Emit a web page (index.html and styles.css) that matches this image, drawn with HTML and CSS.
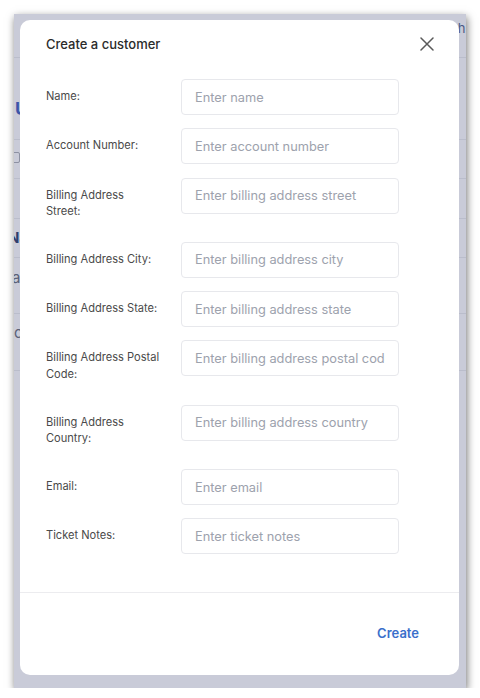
FILE: index.html
```html
<!DOCTYPE html>
<html>
<head>
    <title>Create a customer</title>
    <link rel="stylesheet" href="styles.css">
</head>
<body>
    <div class="frame">
        <!-- bits of the page behind the dimmed overlay -->
        <span class="behind behind-u">U</span>
        <span class="behind behind-line" style="top: 43px;"></span>
        <span class="behind behind-line" style="top: 125px;"></span>
        <span class="behind behind-line" style="top: 164px;"></span>
        <span class="behind behind-line" style="top: 204px;"></span>
        <span class="behind behind-line" style="top: 243px;"></span>
        <span class="behind behind-line" style="top: 299px;"></span>
        <span class="behind behind-line" style="top: 356px;"></span>
        <span class="behind behind-box"></span>
        <span class="behind behind-na">Na</span>
        <span class="behind behind-a">a</span>
        <span class="behind behind-c">c</span>
        <span class="behind behind-h">nh</span>

        <div class="modal">
            <div class="modal-header">
                <h2 class="modal-title">Create a customer</h2>
                <button class="close-btn" aria-label="Close">
                    <svg width="14" height="14" viewBox="0 0 14 14">
                        <path d="M1 1L13 13M13 1L1 13" stroke="#5a5a5a" stroke-width="1.5" stroke-linecap="round"/>
                    </svg>
                </button>
            </div>
            <form class="modal-form">
                <div class="form-row">
                    <label for="name">Name:</label>
                    <input type="text" id="name" placeholder="Enter name">
                </div>
                <div class="form-row">
                    <label for="account">Account Number:</label>
                    <input type="text" id="account" placeholder="Enter account number">
                </div>
                <div class="form-row">
                    <label for="street">Billing Address Street:</label>
                    <input type="text" id="street" placeholder="Enter billing address street">
                </div>
                <div class="form-row">
                    <label for="city">Billing Address City:</label>
                    <input type="text" id="city" placeholder="Enter billing address city">
                </div>
                <div class="form-row">
                    <label for="state">Billing Address State:</label>
                    <input type="text" id="state" placeholder="Enter billing address state">
                </div>
                <div class="form-row">
                    <label for="postal">Billing Address Postal Code:</label>
                    <input type="text" id="postal" placeholder="Enter billing address postal code">
                </div>
                <div class="form-row">
                    <label for="country">Billing Address Country:</label>
                    <input type="text" id="country" placeholder="Enter billing address country">
                </div>
                <div class="form-row">
                    <label for="email">Email:</label>
                    <input type="text" id="email" placeholder="Enter email">
                </div>
                <div class="form-row">
                    <label for="notes">Ticket Notes:</label>
                    <input type="text" id="notes" placeholder="Enter ticket notes">
                </div>
            </form>
            <div class="modal-footer">
                <button class="create-btn">Create</button>
            </div>
        </div>
    </div>
</body>
</html>
```

FILE: styles.css
```css
html, body {
    margin: 0;
    padding: 0;
    background: #ffffff;
    font-family: Inter, "Noto Sans", sans-serif;
}

.frame {
    position: relative;
    box-sizing: border-box;
    width: 452px;
    height: 674px;
    margin: 14px 0 0 14px;
    padding: 6px 7px 13px 6px;
    display: flex;
    flex-direction: column;
    background: #c9cbd8;
    box-shadow: 1px 3px 8px rgba(0, 0, 0, 0.55);
    overflow: hidden;
}

.behind {
    position: absolute;
    font-size: 15px;
    line-height: 18px;
    color: #5b6176;
}

.behind-u {
    left: 1px;
    top: 84px;
    font-size: 18px;
    line-height: 22px;
    font-weight: 700;
    color: #3c55a8;
}

.behind-line {
    left: 0;
    width: 100%;
    height: 1px;
    background: #babdcb;
}

.behind-box {
    left: -6px;
    top: 138px;
    width: 10px;
    height: 9px;
    border: 1px solid #8d91a2;
    border-radius: 2px;
}

.behind-na {
    left: -6px;
    top: 215px;
    font-weight: 700;
    color: #2f3e6d;
}

.behind-a {
    left: -2px;
    top: 255px;
}

.behind-c {
    left: 0;
    top: 310px;
}

.behind-h {
    left: 436px;
    top: 5px;
    font-size: 13px;
    color: #4b5a86;
}

.modal {
    position: relative;
    flex: 1;
    display: flex;
    flex-direction: column;
    background: #ffffff;
    border-radius: 10px;
}

.modal-header {
    display: flex;
    justify-content: space-between;
    align-items: center;
    padding: 16px 25px 0 26px;
}

.modal-title {
    margin: 0;
    font-size: 13px;
    line-height: 16px;
    font-weight: 500;
    color: #2b2b2b;
}

.close-btn {
    border: none;
    background: none;
    padding: 0;
    width: 14px;
    height: 14px;
    display: flex;
}

.modal-form {
    display: flex;
    flex-direction: column;
    gap: 13.3px;
    padding: 27px 26px 0 26px;
}

.form-row {
    display: flex;
    align-items: flex-start;
}

.form-row label {
    flex: 0 0 135px;
    box-sizing: border-box;
    padding: 9px 21px 9px 0;
    font-size: 11.1px;
    line-height: 16.5px;
    color: #4a4a4a;
}

.form-row input {
    box-sizing: border-box;
    width: 218px;
    height: 36px;
    padding: 0 13px;
    border: 1px solid #e7e8ec;
    border-radius: 4px;
    font-family: Inter, "Noto Sans", sans-serif;
    font-size: 12.8px;
    color: #333;
    outline: none;
}

.form-row input::placeholder {
    color: #9da2ad;
}

.modal-footer {
    margin-top: auto;
    display: flex;
    justify-content: flex-end;
    border-top: 1px solid #ececef;
    padding: 32px 40px 34px;
}

.create-btn {
    border: none;
    background: none;
    padding: 0;
    font-family: Inter, "Noto Sans", sans-serif;
    font-size: 13px;
    line-height: 16px;
    font-weight: 600;
    color: #3a6fcb;
}
```
